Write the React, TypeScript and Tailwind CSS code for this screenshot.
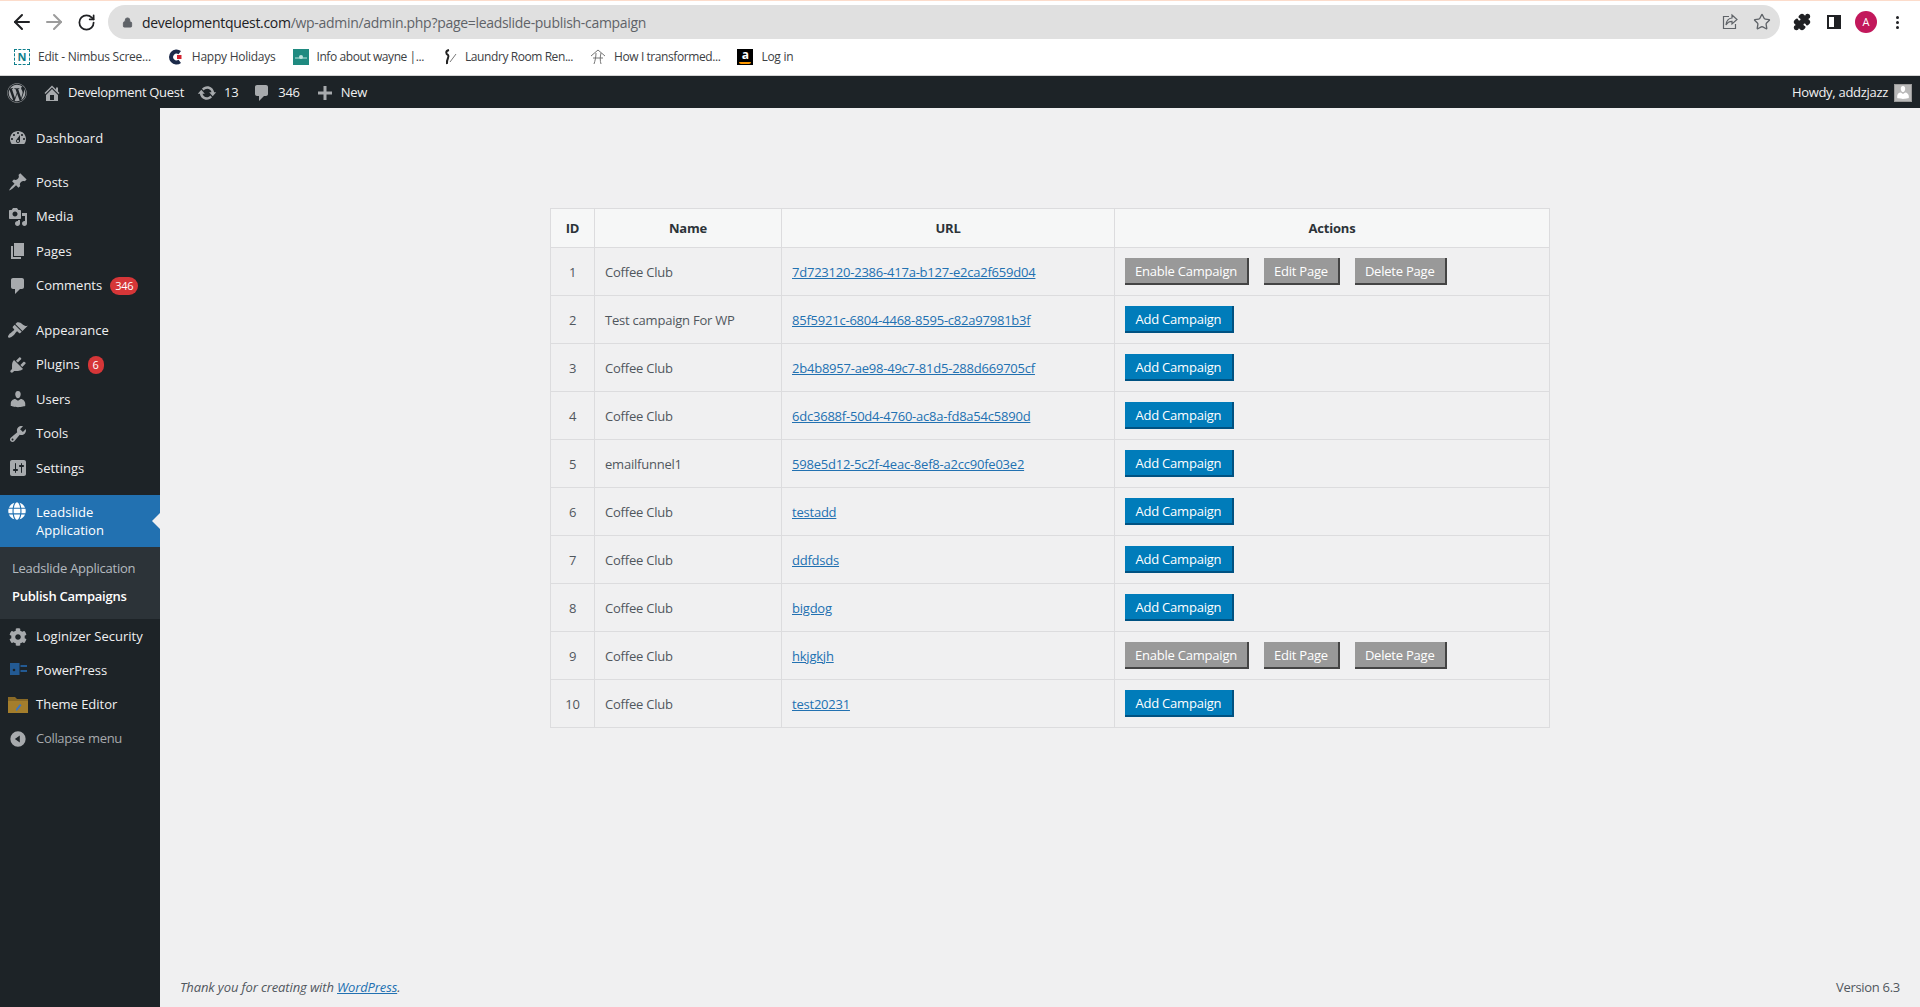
import { ArrowLeft, ArrowRight, RotateCw, Lock, Star, Puzzle } from "lucide-react";
import { FaWordpress, FaGlobe, FaCog } from "react-icons/fa";
import type { ReactNode } from "react";

const FONT = "font-['Open_Sans','Noto_Sans',sans-serif]";

function Dash({ d, className }: { d: string; className?: string }) {
  return (
    <svg viewBox="0 0 20 20" fill="currentColor" className={className ?? "h-5 w-5 shrink-0"}>
      <path d={d} />
    </svg>
  );
}

const icons = {
  dashboard:
    "M3.76 16h12.48c1.1-1.37 1.76-3.11 1.76-5 0-4.42-3.58-8-8-8s-8 3.58-8 8c0 1.89.66 3.63 1.76 5zM10 4c.55 0 1 .45 1 1s-.45 1-1 1-1-.45-1-1 .45-1 1-1zM6 6c.55 0 1 .45 1 1s-.45 1-1 1-1-.45-1-1 .45-1 1-1zm8 0c.55 0 1 .45 1 1s-.45 1-1 1-1-.45-1-1 .45-1 1-1zm-5.37 5.55L12 7v6c0 1.1-.9 2-2 2s-2-.9-2-2c0-.57.24-1.08.63-1.45zM4 10c.55 0 1 .45 1 1s-.45 1-1 1-1-.45-1-1 .45-1 1-1zm12 0c.55 0 1 .45 1 1s-.45 1-1 1-1-.45-1-1 .45-1 1-1zm-5 3c0-.55-.45-1-1-1s-1 .45-1 1 .45 1 1 1 1-.45 1-1z",
  post: "M10.44 3.02l1.82-1.82 6.36 6.35-1.83 1.82c-1.05-.68-2.48-.57-3.41.36l-.75.75c-.92.93-1.04 2.35-.35 3.41l-1.83 1.82-2.41-2.41-2.8 2.79c-.42.42-3.38 2.71-3.8 2.29s1.86-3.39 2.28-3.81l2.79-2.79L4.1 9.36l1.83-1.82c1.05.69 2.48.57 3.4-.36l.75-.75c.93-.92 1.05-2.35.36-3.41z",
  media:
    "M13 11V4c0-.55-.45-1-1-1h-1.67L9 1H5L3.67 3H2c-.55 0-1 .45-1 1v7c0 .55.45 1 1 1h10c.55 0 1-.45 1-1zM7 4.5c1.38 0 2.5 1.12 2.5 2.5S8.38 9.5 7 9.5 4.5 8.38 4.5 7 5.62 4.5 7 4.5zM14 6h5v10.5c0 1.38-1.12 2.5-2.5 2.5S14 17.88 14 16.5s1.12-2.5 2.5-2.5c.17 0 .34.02.5.05V9h-3V6zm-4 8.05V13h2v3.5c0 1.38-1.12 2.5-2.5 2.5S7 17.88 7 16.5 8.12 14 9.5 14c.17 0 .34.02.5.05z",
  page: "M6 15V2h10v13H6zm-1 1h8v2H3V5h2v11z",
  comment: "M5 2h9c1.1 0 2 .9 2 2v7c0 1.1-.9 2-2 2h-2l-5 5v-5H5c-1.1 0-2-.9-2-2V4c0-1.1.9-2 2-2z",
  appearance:
    "M14.48 11.06L7.41 3.99l1.5-1.5c.5-.56 2.3-.47 3.51.32 1.21.8 1.43 1.28 2.91 2.1 1.18.64 2.45 1.26 4.45.85zm-.71.71L6.7 4.7 4.93 6.47c-.39.39-.39 1.02 0 1.41l1.06 1.06c.39.39.39 1.03 0 1.42-.6.6-1.43 1.11-2.21 1.69-.35.26-.7.53-1.01.84C1.43 13.23 0 15.83 0 16.43c0 .28.07.61.42.96.34.35.67.42.95.42.6 0 3.2-1.43 4.54-2.77.31-.31.58-.66.84-1.01.58-.78 1.09-1.61 1.69-2.21.39-.39 1.03-.39 1.42 0l1.06 1.06c.39.39 1.02.39 1.41 0z",
  plugin:
    "M13.11 4.36L9.87 7.6 8 5.73l3.24-3.24c.35-.34 1.05-.2 1.56.32.52.51.66 1.21.31 1.55zm-8 1.77l.91-1.12 9.01 9.01-1.19.84c-.71.71-2.63 1.16-3.82 1.16H6.14L4.9 17.26c-.59.59-1.54.59-2.12 0-.59-.58-.59-1.53 0-2.12l1.24-1.24v-3.88c0-1.13.4-3.19 1.09-3.89zm7.26 3.97l3.24-3.24c.34-.35 1.04-.21 1.55.31.52.51.66 1.21.31 1.55l-3.24 3.25z",
  users:
    "M10 9.25c-2.27 0-2.73-3.44-2.73-3.44C7 4.02 7.82 2 9.97 2c2.16 0 2.98 2.02 2.71 3.81 0 0-.41 3.44-2.68 3.44zm0 2.57L12.72 10c2.39 0 4.52 2.33 4.52 4.53v2.49s-3.65 1.13-7.24 1.13c-3.65 0-7.24-1.13-7.24-1.13v-2.49c0-2.25 1.94-4.48 4.47-4.48z",
  tools:
    "M16.68 9.77c-1.34 1.34-3.3 1.67-4.95.99l-5.41 6.52c-.99.99-2.59.99-3.58 0s-.99-2.59 0-3.57l6.52-5.42c-.68-1.65-.35-3.61.99-4.95 1.28-1.28 3.12-1.62 4.72-1.06l-2.89 2.89 2.82 2.82 2.86-2.87c.53 1.58.18 3.39-1.08 4.65zM3.81 16.21c.4.39 1.04.39 1.43 0 .4-.4.4-1.04 0-1.43-.39-.4-1.03-.4-1.43 0-.39.39-.39 1.03 0 1.43z",
  settings:
    "M18 16V4c0-1.1-.9-2-2-2H4c-1.1 0-2 .9-2 2v12c0 1.1.9 2 2 2h12c1.1 0 2-.9 2-2zM8 11h1c.55 0 1 .45 1 1s-.45 1-1 1H8v1.5c0 .28-.22.5-.5.5s-.5-.22-.5-.5V13H6c-.55 0-1-.45-1-1s.45-1 1-1h1V5.5c0-.28.22-.5.5-.5s.5.22.5.5V11zm5-2h-1c-.55 0-1-.45-1-1s.45-1 1-1h1V5.5c0-.28.22-.5.5-.5s.5.22.5.5V7h1c.55 0 1 .45 1 1s-.45 1-1 1h-1v5.5c0 .28-.22.5-.5.5s-.5-.22-.5-.5V9z",
  home: "M16 8.5l1.53 1.53-1.06 1.06L10 4.62l-6.47 6.47-1.06-1.06L10 2.5l4 4v-2h2v4zm-6-2.46l6 5.99V18H4v-5.97zM12 17v-5H8v5h4z",
  update:
    "M10.2 3.28c3.53 0 6.43 2.61 6.92 6h2.08l-3.5 4-3.5-4h2.32c-.45-1.97-2.21-3.45-4.32-3.45-1.45 0-2.73.71-3.54 1.78L4.95 5.66C6.23 4.2 8.11 3.28 10.2 3.28zm-.4 13.44c-3.52 0-6.43-2.61-6.92-6H.8l3.5-4c1.17 1.33 2.33 2.67 3.5 4H5.48c.45 1.97 2.21 3.45 4.32 3.45 1.45 0 2.73-.71 3.54-1.78l1.71 1.95c-1.28 1.46-3.15 2.38-5.25 2.38z",
  plus: "M17 8.5v3h-5.5V17h-3v-5.5H3v-3h5.5V3h3v5.5H17z",
};

function Bookmark({ icon, label, tight }: { icon: ReactNode; label: string; tight?: boolean }) {
  return (
    <div className="flex items-center gap-2">
      <span className="flex h-4 w-4 items-center justify-center">{icon}</span>
      <span className={`text-[12px] text-[#3c4043] ${tight ? "tracking-[-0.42px]" : "tracking-[-0.25px]"}`}>{label}</span>
    </div>
  );
}

function BrowserChrome() {
  return (
    <div className="bg-white">
      <div className="h-px bg-[#fcdccb]" />
      <div className="flex h-[38px] items-start pt-[4px]">
        <div className="flex h-[34px] w-[108px] items-center gap-2 pl-[10px] text-[#202124]">
          <ArrowLeft className="h-6 w-6" strokeWidth={2} />
          <ArrowRight className="h-6 w-6 text-[#9c9c9c]" strokeWidth={2} />
          <RotateCw className="ml-[2.5px] h-[19px] w-[19px]" strokeWidth={2.2} />
        </div>
        <div className="flex h-[34px] w-[1672px] items-center rounded-full bg-[#e0e0e0] pl-[14px] pr-[9px]">
          <Lock className="h-[11px] w-[11px] text-[#5f6368]" fill="#5f6368" />
          <span className="ml-[9px] text-[14px] tracking-[-0.3px] text-[#202124]">developmentquest.com</span>
          <span className="text-[14px] tracking-[-0.3px] text-[#5f6368]">
            /wp-admin/admin.php?page=leadslide-publish-campaign
          </span>
          <div className="ml-auto flex items-center gap-[14px] text-[#5f6368]">
            <svg viewBox="0 0 18 18" className="h-[18px] w-[18px]" fill="none" stroke="currentColor" strokeWidth="1.2">
              <path d="M8 3.5H2.5v12h12V11" />
              <path d="M11 2l5 4.5-5 4.5V8.3C8 8.3 6.3 9.5 5 12c.3-4 2.5-6.6 6-7z" />
            </svg>
            <Star className="h-[18px] w-[18px]" strokeWidth={1.8} />
          </div>
        </div>
        <div className="flex h-[34px] flex-1 items-center pl-[13px] text-[#202124]">
          <Puzzle className="h-[18px] w-[18px]" fill="#202124" />
          <span className="ml-[16px] flex h-[14px] w-[14px] justify-end border-2 border-[#202124]">
            <span className="w-[5px] bg-[#202124]" />
          </span>
          <span className="ml-[14px] flex h-[22px] w-[22px] items-center justify-center rounded-full bg-[#c2185b] text-[11px] text-white">
            A
          </span>
          <span className="ml-[19px] flex flex-col gap-[2px]">
            <span className="h-[3px] w-[3px] rounded-full bg-[#202124]" />
            <span className="h-[3px] w-[3px] rounded-full bg-[#202124]" />
            <span className="h-[3px] w-[3px] rounded-full bg-[#202124]" />
          </span>
        </div>
      </div>
      <div className="flex h-[37px] items-center gap-[17px] border-b border-[#d4d4d4] pb-px pl-[14px]">
        <Bookmark
          label="Edit - Nimbus Scree..."
          icon={
            <span className="flex h-4 w-4 items-center justify-center border border-dashed border-[#0e7f8c] text-[11px] font-bold leading-none text-[#0e7f8c]">
              N
            </span>
          }
        />
        <Bookmark
          label="Happy Holidays"
          icon={
            <svg viewBox="0 0 16 16" className="h-4 w-4">
              <path d="M13 2A7.5 7.5 0 1 0 13 14L10.5 10.8A3.4 3.4 0 1 1 10.5 5.2Z" fill="#1c2a4a" />
              <path d="M9 6h4.5v4H9z" fill="#d3222f" />
            </svg>
          }
        />
        <Bookmark
          tight
          label="Info about wayne |..."
          icon={
            <svg viewBox="0 0 16 16" className="h-4 w-4">
              <rect width="16" height="16" fill="#1f8a80" />
              <path d="M2 9h12" stroke="#bfe3dd" strokeWidth="1" />
              <circle cx="8" cy="8" r="2" fill="#bfe3dd" />
            </svg>
          }
        />
        <Bookmark
          tight
          label="Laundry Room Ren..."
          icon={
            <svg viewBox="0 0 16 16" className="h-4 w-4" fill="none">
              <path d="M8 1C4 2 5 5 7 6 9 8 5 10 6 15" stroke="#222" strokeWidth="2" />
              <path d="M9 13l6-8" stroke="#777" strokeWidth="1" />
            </svg>
          }
        />
        <Bookmark
          tight
          label="How I transformed..."
          icon={
            <svg viewBox="0 0 16 16" className="h-4 w-4" fill="none" stroke="#666" strokeWidth="0.9">
              <path d="M1 7l7-6 7 6M6 4c0 4-1 8-2 11M11 4c-1 4-1 8 0 11M3 9h10" />
            </svg>
          }
        />
        <Bookmark
          label="Log in"
          icon={
            <span className="relative flex h-4 w-4 items-start justify-center bg-black text-[12px] font-bold leading-[12px] text-white">
              a
              <span className="absolute bottom-[1px] left-[2px] h-[2px] w-[12px] rounded-b-full bg-[#f90]" />
            </span>
          }
        />
      </div>
    </div>
  );
}

function AdminBar() {
  return (
    <div className="flex h-[32px] items-center bg-[#1d2327] pt-px text-[13px] tracking-[-0.3px] text-[#f0f0f1]">
      <FaWordpress className="ml-[7px] h-5 w-5 text-[#a7aaad]" />
      <Dash d={icons.home} className="ml-[15px] h-[20px] w-[20px] text-[#a7aaad]" />
      <span className="ml-[6px]">Development Quest</span>
      <Dash d={icons.update} className="ml-[13px] h-[20px] w-[20px] text-[#a7aaad]" />
      <span className="ml-[7px]">13</span>
      <Dash d={icons.comment} className="ml-[14px] h-[20px] w-[20px] text-[#a7aaad]" />
      <span className="ml-[6px]">346</span>
      <Dash d={icons.plus} className="ml-[15px] h-[20px] w-[20px] text-[#a7aaad]" />
      <span className="ml-[6px]">New</span>
      <div className="ml-auto flex items-center pr-[8px]">
        <span>Howdy, addzjazz</span>
        <span className="ml-[6px] flex h-[18px] w-[18px] items-end justify-center overflow-hidden border border-[#999] bg-[#b9b9b9]">
          <Dash d={icons.users} className="h-[17px] w-[17px] text-white" />
        </span>
      </div>
    </div>
  );
}

function MenuItem({
  icon,
  label,
  badge,
  muted,
  compact,
}: {
  icon: ReactNode;
  label: string;
  badge?: string;
  muted?: boolean;
  compact?: boolean;
}) {
  return (
    <li
      className={`flex items-center gap-2 pl-2 ${compact ? "h-[34px] pt-[2px]" : "h-[34.5px]"} ${
        muted ? "tracking-[-0.3px] text-[#a7aaad]" : "text-[#f0f0f1]"
      }`}
    >
      <span className="flex h-5 w-5 shrink-0 items-center justify-center text-[#a7aaad]">{icon}</span>
      <span>{label}</span>
      {badge && (
        <span className="flex h-[18px] items-center rounded-full bg-[#d63638] px-[5px] text-[11px] tracking-[-0.2px] text-white">
          {badge}
        </span>
      )}
    </li>
  );
}

function Sidebar() {
  return (
    <aside className="w-[160px] shrink-0 bg-[#1d2327] pt-[13px] text-[13px]">
      <ul>
        <MenuItem icon={<Dash d={icons.dashboard} />} label="Dashboard" />
      </ul>
      <ul className="mt-[9.5px]">
        <MenuItem icon={<Dash d={icons.post} />} label="Posts" />
        <MenuItem icon={<Dash d={icons.media} />} label="Media" />
        <MenuItem icon={<Dash d={icons.page} />} label="Pages" />
        <MenuItem icon={<Dash d={icons.comment} />} label="Comments" badge="346" />
      </ul>
      <ul className="mt-[10px]">
        <MenuItem icon={<Dash d={icons.appearance} />} label="Appearance" />
        <MenuItem icon={<Dash d={icons.plugin} />} label="Plugins" badge="6" />
        <MenuItem icon={<Dash d={icons.users} />} label="Users" />
        <MenuItem icon={<Dash d={icons.tools} />} label="Tools" />
        <MenuItem icon={<Dash d={icons.settings} />} label="Settings" />
      </ul>
      <div className="relative mt-[9.5px] flex h-[52px] gap-2 bg-[#2271b1] pl-2 pt-[8px] leading-[18px] text-white">
        <FaGlobe className="mt-[-1px] h-[18px] w-[18px] shrink-0 text-white" />
        <span className="ml-[2px]">
          Leadslide
          <br />
          Application
        </span>
        <span className="absolute right-0 top-[18px] h-0 w-0 border-y-[8px] border-r-[8px] border-y-transparent border-r-[#f0f0f1]" />
      </div>
      <ul className="bg-[#2c3338] pb-[8px] pt-[8px] tracking-[-0.25px]">
        <li className="flex h-[28px] items-center pl-3 text-[#f0f6fcb3]">Leadslide Application</li>
        <li className="flex h-[28px] items-center pl-3 font-semibold text-white">Publish Campaigns</li>
      </ul>
      <ul>
        <MenuItem compact icon={<FaCog className="h-[18px] w-[18px]" />} label="Loginizer Security" />
        <MenuItem
          compact
          icon={
            <svg viewBox="0 0 20 20" className="h-5 w-5" fill="#235a93">
              <path d="M2 2h9.5v12H2zM12.5 4H19v2h-6.5zM12.5 9H19v2h-6.5z" />
              <circle cx="6" cy="9" r="1.3" fill="#1d2327" />
            </svg>
          }
          label="PowerPress"
        />
        <MenuItem
          compact
          icon={
            <svg viewBox="0 0 20 20" className="h-5 w-5">
              <path d="M0 2h7l2 2h11v14H0z" fill="#8a6a26" />
              <path d="M0 6h20v12H0z" fill="#a47e2c" />
              <path d="M8 14l4-5 1.5 1.2-4 5L8 16z" fill="#3a76c4" />
            </svg>
          }
          label="Theme Editor"
        />
        <MenuItem
          compact
          muted
          icon={
            <svg viewBox="0 0 20 20" className="h-[18px] w-[18px]" fill="currentColor">
              <path d="M10 1.5a8.5 8.5 0 1 0 0 17 8.5 8.5 0 0 0 0-17zM12 6v8L6.5 10z" fillRule="evenodd" />
            </svg>
          }
          label="Collapse menu"
        />
      </ul>
    </aside>
  );
}

type Row = { id: number; name: string; url: string; enabled?: boolean };

const rows: Row[] = [
  { id: 1, name: "Coffee Club", url: "7d723120-2386-417a-b127-e2ca2f659d04", enabled: true },
  { id: 2, name: "Test campaign For WP", url: "85f5921c-6804-4468-8595-c82a97981b3f" },
  { id: 3, name: "Coffee Club", url: "2b4b8957-ae98-49c7-81d5-288d669705cf" },
  { id: 4, name: "Coffee Club", url: "6dc3688f-50d4-4760-ac8a-fd8a54c5890d" },
  { id: 5, name: "emailfunnel1", url: "598e5d12-5c2f-4eac-8ef8-a2cc90fe03e2" },
  { id: 6, name: "Coffee Club", url: "testadd" },
  { id: 7, name: "Coffee Club", url: "ddfdsds" },
  { id: 8, name: "Coffee Club", url: "bigdog" },
  { id: 9, name: "Coffee Club", url: "hkjgkjh", enabled: true },
  { id: 10, name: "Coffee Club", url: "test20231" },
];

function GreyButton({ children }: { children: ReactNode }) {
  return (
    <button className="h-[27px] whitespace-nowrap border-b-2 border-r-2 border-[#444] bg-[#999] px-[10px] pt-[2px] text-[13px] leading-none text-white">
      {children}
    </button>
  );
}

function CampaignTable() {
  return (
    <table className="mx-auto w-[1000px] table-fixed border-collapse text-[13px] tracking-[-0.22px] text-[#50575e]">
      <colgroup>
        <col className="w-[44px]" />
        <col className="w-[187px]" />
        <col className="w-[333px]" />
        <col />
      </colgroup>
      <thead>
        <tr className="h-[39px] bg-[#f6f7f7] text-[#2c3338]">
          <th className="border border-[#dcdcde] pt-[2px] font-bold">ID</th>
          <th className="border border-[#dcdcde] pt-[2px] font-bold">Name</th>
          <th className="border border-[#dcdcde] pt-[2px] font-bold">URL</th>
          <th className="border border-[#dcdcde] pt-[2px] font-bold">Actions</th>
        </tr>
      </thead>
      <tbody>
        {rows.map((row) => (
          <tr key={row.id} className="h-[48px]">
            <td className="border border-[#dcdcde] pt-[2px] text-center">{row.id}</td>
            <td className="border border-[#dcdcde] px-[10px] pt-[2px]">{row.name}</td>
            <td className="border border-[#dcdcde] px-[10px] pt-[2px]">
              <a className="text-[#2271b1] underline" href="#">
                {row.url}
              </a>
            </td>
            <td className="border border-[#dcdcde] px-[10px]">
              {row.enabled ? (
                <div className="flex gap-[15px]">
                  <GreyButton>Enable Campaign</GreyButton>
                  <GreyButton>Edit Page</GreyButton>
                  <GreyButton>Delete Page</GreyButton>
                </div>
              ) : (
                <button className="block h-[27px] whitespace-nowrap border-b-2 border-r-2 border-[#005282] bg-[#007cba] px-[10.5px] pt-[2px] text-[13px] leading-none text-white">
                  Add Campaign
                </button>
              )}
            </td>
          </tr>
        ))}
      </tbody>
    </table>
  );
}

export default function App() {
  return (
    <div className={`flex h-[1007px] w-[1920px] flex-col overflow-hidden bg-[#f0f0f1] ${FONT}`}>
      <BrowserChrome />
      <AdminBar />
      <div className="flex min-h-0 flex-1">
        <Sidebar />
        <main className="flex flex-1 flex-col pl-5 pt-[100px]">
          <CampaignTable />
          <footer className="mt-auto flex justify-between pb-[10px] pr-5 text-[13px] text-[#50575e]">
            <span className="italic tracking-[-0.12px]">
              Thank you for creating with{" "}
              <a className="text-[#2271b1] underline" href="#">
                WordPress
              </a>
              .
            </span>
            <span className="tracking-[-0.3px]">Version 6.3</span>
          </footer>
        </main>
      </div>
    </div>
  );
}
